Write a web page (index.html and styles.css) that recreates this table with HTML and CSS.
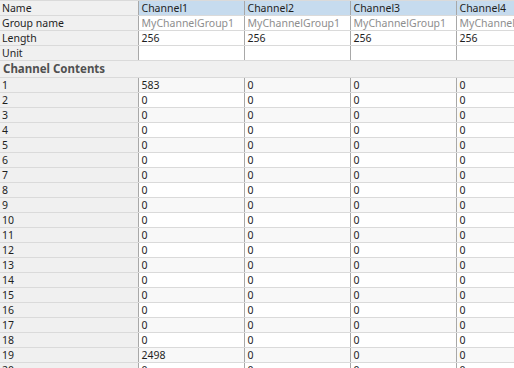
FILE: index.html
```html
<!DOCTYPE html>
<html>
<head>
<meta charset="utf-8">
<link rel="stylesheet" href="styles.css">
</head>
<body>
<table class="grid">
  <colgroup>
    <col class="c-label"><col class="c-ch"><col class="c-ch"><col class="c-ch"><col class="c-ch">
  </colgroup>
  <tbody>
    <tr class="hdr"><th class="lbl">Name</th><td class="ch">Channel1</td><td class="ch">Channel2</td><td class="ch">Channel3</td><td class="ch">Channel4</td></tr>
    <tr><th class="lbl">Group name</th><td class="muted">MyChannelGroup1</td><td class="muted">MyChannelGroup1</td><td class="muted">MyChannelGroup1</td><td class="muted">MyChannelGroup1</td></tr>
    <tr><th class="lbl">Length</th><td>256</td><td>256</td><td>256</td><td>256</td></tr>
    <tr><th class="lbl">Unit</th><td></td><td></td><td></td><td></td></tr>
    <tr class="section"><th colspan="5">Channel Contents</th></tr>
    <tr class="odd"><th class="lbl">1</th><td>583</td><td>0</td><td>0</td><td>0</td></tr>
    <tr><th class="lbl">2</th><td>0</td><td>0</td><td>0</td><td>0</td></tr>
    <tr class="odd"><th class="lbl">3</th><td>0</td><td>0</td><td>0</td><td>0</td></tr>
    <tr><th class="lbl">4</th><td>0</td><td>0</td><td>0</td><td>0</td></tr>
    <tr class="odd"><th class="lbl">5</th><td>0</td><td>0</td><td>0</td><td>0</td></tr>
    <tr><th class="lbl">6</th><td>0</td><td>0</td><td>0</td><td>0</td></tr>
    <tr class="odd"><th class="lbl">7</th><td>0</td><td>0</td><td>0</td><td>0</td></tr>
    <tr><th class="lbl">8</th><td>0</td><td>0</td><td>0</td><td>0</td></tr>
    <tr class="odd"><th class="lbl">9</th><td>0</td><td>0</td><td>0</td><td>0</td></tr>
    <tr><th class="lbl">10</th><td>0</td><td>0</td><td>0</td><td>0</td></tr>
    <tr class="odd"><th class="lbl">11</th><td>0</td><td>0</td><td>0</td><td>0</td></tr>
    <tr><th class="lbl">12</th><td>0</td><td>0</td><td>0</td><td>0</td></tr>
    <tr class="odd"><th class="lbl">13</th><td>0</td><td>0</td><td>0</td><td>0</td></tr>
    <tr><th class="lbl">14</th><td>0</td><td>0</td><td>0</td><td>0</td></tr>
    <tr class="odd"><th class="lbl">15</th><td>0</td><td>0</td><td>0</td><td>0</td></tr>
    <tr><th class="lbl">16</th><td>0</td><td>0</td><td>0</td><td>0</td></tr>
    <tr class="odd"><th class="lbl">17</th><td>0</td><td>0</td><td>0</td><td>0</td></tr>
    <tr><th class="lbl">18</th><td>0</td><td>0</td><td>0</td><td>0</td></tr>
    <tr class="odd"><th class="lbl">19</th><td>2498</td><td>0</td><td>0</td><td>0</td></tr>
    <tr><th class="lbl">20</th><td>0</td><td>0</td><td>0</td><td>0</td></tr>
  </tbody>
</table>
</body>
</html>
```
FILE: styles.css
```css
html, body {
  margin: 0;
  padding: 0;
  background: #ffffff;
  overflow: hidden;
}
body {
  width: 514px;
  height: 368px;
  font-family: "Noto Sans", "Open Sans", sans-serif;
  font-size: 10.5px;
  color: #1e1e1e;
}
.grid {
  border-collapse: collapse;
  table-layout: fixed;
  width: 562px;
}
.c-label { width: 138px; }
.c-ch { width: 106px; }
.grid th, .grid td {
  height: 14px;
  padding: 0 0 0 3px;
  line-height: 14px;
  text-align: left;
  font-weight: normal;
  white-space: nowrap;
  overflow: hidden;
  border-bottom: 1px solid #dadada;
  border-left: 1px solid #a8a8a8;
  vertical-align: middle;
}
.grid th.lbl {
  padding-left: 2px;
  background: #f0f0f0;
  border-left: none;
  color: #1e1e1e;
}
.grid tr:first-child th, .grid tr:first-child td {
  border-top: 1px solid #dadada;
}
.grid td.ch {
  background: #c6dbee;
}
.grid td.muted {
  color: #8e8e8e;
}
.grid tr.odd td {
  background: #f8f8f8;
}
.grid tr.section th {
  height: 16px;
  line-height: 16px;
  background: #f0f0f0;
  border-left: none;
  padding-left: 3px;
  font-size: 11.5px;
  font-weight: bold;
  color: #505050;
}
```
